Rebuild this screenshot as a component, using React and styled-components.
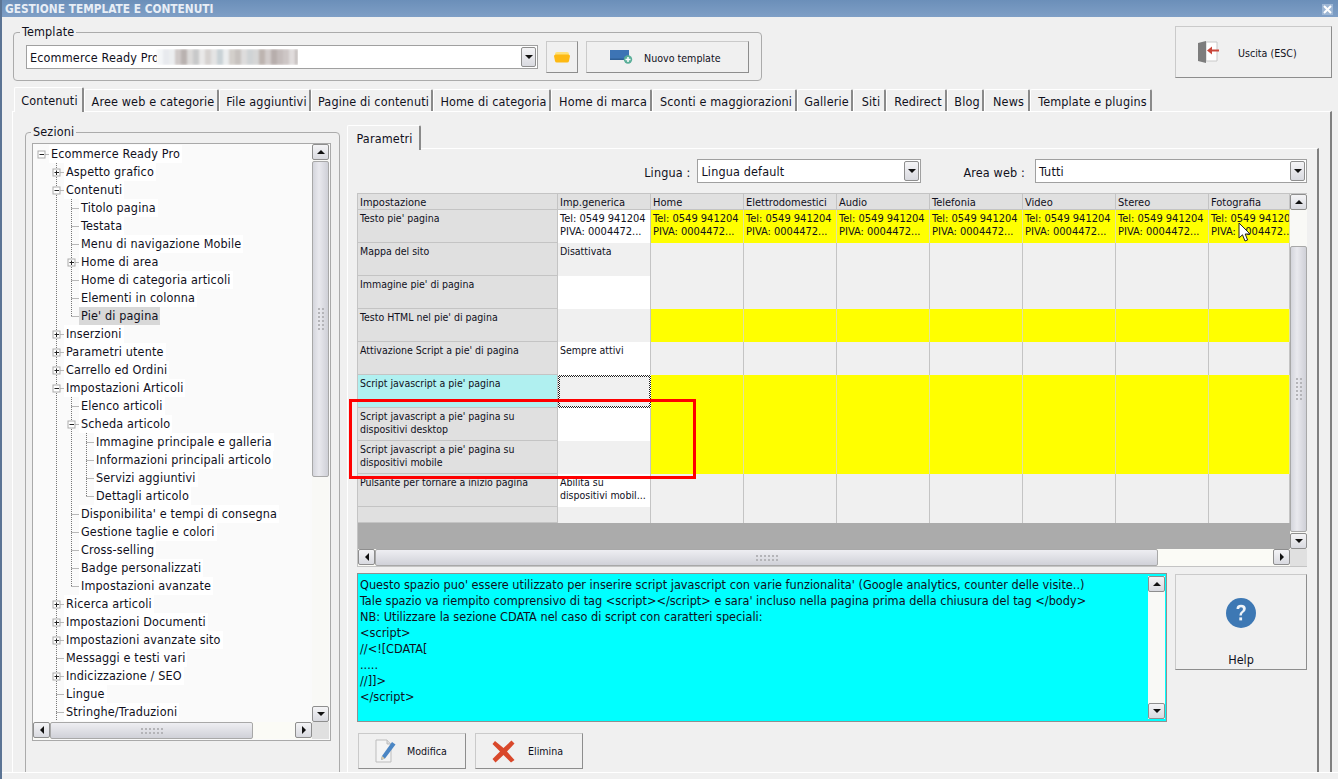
import React from 'react';
import styled, { createGlobalStyle } from 'styled-components';

const GlobalStyle = createGlobalStyle`
  html, body { margin: 0; padding: 0; background: #f0f0f0; }
  * { box-sizing: border-box; }
  body {
    font-family: "DejaVu Sans Condensed", "DejaVu Sans", sans-serif;
    font-stretch: condensed;
    font-size: 12.5px;
    letter-spacing: 0.15px;
    color: #10101c;
  }
`;

const Page = styled.div`
  position: relative;
  width: 1338px;
  height: 779px;
  overflow: hidden;
  display: flex;
  flex-direction: column;
  background: #f0f0f0;
  border-left: 2px solid #5b7494;
`;

const TitleBar = styled.div`
  height: 17px;
  flex: none;
  display: flex;
  align-items: center;
  justify-content: space-between;
  margin-left: -2px;
  padding: 1px 5px 0 5px;
  background: linear-gradient(#6b8fb9, #7f9fc6);
  color: #e8eef6;
  font-weight: bold;
  font-size: 11.8px;
  letter-spacing: 0;
`;

const CloseBox = styled.span`
  width: 11px;
  height: 11px;
  display: flex;
  align-items: center;
  justify-content: center;
  background: #9db6d4;
`;

const Header = styled.div`
  height: 70px;
  flex: none;
  display: flex;
  justify-content: space-between;
  align-items: flex-start;
  padding: 0 6px 0 11px;
`;

const Group = styled.fieldset`
  margin: 8px 0 0;
  padding: 0 12px;
  width: ${p => p.$w}px;
  height: ${p => p.$h}px;
  flex: none;
  border: 1px solid #ababab;
  border-radius: 4px;
`;

const GroupLabel = styled.legend`
  margin-left: ${p => p.$shift}px;
  padding: 0 2px;
  line-height: 14px;
`;

const TemplateRow = styled.div`
  display: flex;
  align-items: center;
  gap: 8px;
  padding-top: 2px;
`;

const Combo = styled.div`
  width: ${p => p.$w}px;
  height: 24px;
  flex: none;
  display: flex;
  align-items: center;
  justify-content: space-between;
  padding: 0 1px 0 3px;
  background: #fff;
  border: 1px solid #a0a0a0;
`;

const ComboText = styled.span`
  display: flex;
  align-items: center;
  overflow: hidden;
  white-space: nowrap;
`;

const ClippedName = styled.span`
  width: 127px;
  overflow: hidden;
`;

const blurStops = [
  '#f4f6f8', '#e8eaee', '#eceef0', '#cfc9c8', '#b9b2b0', '#dcdad9', '#c8c9ca', '#e9e8e8', '#d6d2d0',
  '#e4e4e4', '#c9d2d6', '#ebedee', '#d3cfcb', '#c7c2bf', '#dddcdc', '#cfd3d5', '#d6d6d6', '#bdb4b0',
  '#d2cccb', '#b7aeac', '#c4bcbb', '#cdc6c5', '#e0dcdc', '#c4bebd',
];

const blurGradient = blurStops
  .map((c, i) => `${c} ${i * 6}px, ${c} ${(i + 1) * 6}px`)
  .join(', ');

const BlurredUrl = styled.span`
  width: 141px;
  height: 16px;
  background: linear-gradient(90deg, ${blurGradient});
  filter: blur(0.8px);
`;

const FlatButton = styled.button`
  width: ${p => p.$w}px;
  height: ${p => p.$h}px;
  margin-top: ${p => p.$top || 0}px;
  flex: none;
  display: flex;
  flex-direction: ${p => (p.$stack ? 'column' : 'row')};
  align-items: center;
  justify-content: ${p => (p.$stack ? 'space-between' : 'flex-start')};
  gap: ${p => p.$gap || 0}px;
  padding: ${p => p.$pad || '0'};
  background: #f0f0f0;
  border: 1px solid #cacaca;
  border-right-color: #8d8d8d;
  border-bottom-color: #8d8d8d;
  font: inherit;
  font-size: 10.6px;
  letter-spacing: 0;
  color: #10101c;
`;

const ButtonText = styled.span`
  margin-top: ${p => p.$down || 0}px;
`;

const Tabs = styled.div`
  height: 24px;
  flex: none;
  display: flex;
  align-items: flex-end;
  padding-left: 12px;
`;

const Tab = styled.div`
  position: relative;
  z-index: 1;
  width: ${p => p.$w}px;
  height: ${p => (p.$active ? 25 : 22)}px;
  margin-bottom: ${p => (p.$active ? -1 : 0)}px;
  padding: 1px 0 0 ${p => (p.$active ? 2 : 4)}px;
  flex: none;
  display: flex;
  align-items: center;
  justify-content: center;
  white-space: nowrap;
  background: #f0f0f0;
  border-top: 1px solid #fff;
  border-left: 1px solid #fff;
  border-right: 2px solid #8a8a8a;
  border-top-left-radius: 2px;
  border-top-right-radius: 2px;
`;

const Panel = styled.div`
  height: 661px;
  flex: none;
  margin: 0 6px 0 10px;
  padding: 13px 0 0 12px;
  display: flex;
  align-items: flex-start;
  overflow: hidden;
  border-top: 1px solid #fff;
  border-left: 1px solid #fff;
  border-right: 2px solid #808080;
`;

const SectionsGroup = styled(Group)`
  margin: 0;
  padding: 0 7px 0 6px;
`;

const TreeBox = styled.div`
  width: 299px;
  height: 598px;
  margin-top: 4px;
  display: grid;
  grid-template-columns: 279px 17px;
  grid-template-rows: 578px 17px;
  background: #fafafa;
  border: 1px solid #a9a9a9;
`;

const TreeList = styled.div`
  overflow: hidden;
  padding-top: 1px;
`;

const TreeRow = styled.div`
  height: 18px;
  display: flex;
  align-items: center;
  white-space: nowrap;
`;

const TreeLabel = styled.span`
  height: 18px;
  line-height: 18px;
  padding: 0 2px;
  background: ${p => (p.$selected ? '#d8d8d8' : '#fff')};
`;

const RightColumn = styled.div`
  width: 972px;
  flex: none;
  margin-left: 7px;
`;

const SubTabs = styled.div`
  display: flex;
  height: 23px;
`;

const SubPanel = styled.div`
  height: 700px;
  padding: 10px 0 0 9px;
  border-top: 1px solid #fff;
  border-left: 1px solid #fff;
  border-right: 2px solid #808080;
`;

const Selectors = styled.div`
  width: 950px;
  display: flex;
  align-items: center;
  justify-content: flex-end;
`;

const SelectorLabel = styled.span`
  margin: 3px ${p => p.$gap}px 0 ${p => p.$before || 0}px;
`;

const GridBox = styled.div`
  width: 950px;
  height: 374px;
  margin-top: 10px;
  display: grid;
  grid-template-columns: 932px 17px;
  grid-template-rows: 355px 17px;
  border: 1px solid #c4c4c4;
  background: #e0e0e0;
`;

const GridArea = styled.div`
  background: #ababab;
  overflow: hidden;
`;

const Table = styled.div`
  display: grid;
  grid-template-columns: 200px repeat(7, 93px) 81px;
  grid-template-rows: 16px repeat(9, 33px) 16px;
  font-size: 10.5px;
  letter-spacing: 0;
  line-height: 13px;
`;

const HeadCell = styled.div`
  background: #e0e0e0;
  padding: 2px 0 0 2px;
  font-size: 11px;
  border-right: 1px solid #c4c4c4;
  border-bottom: 1px solid #c4c4c4;
  white-space: nowrap;
  overflow: hidden;
`;

const LabelCell = styled.div`
  background: ${p => (p.$current ? '#b0f0f0' : '#e0e0e0')};
  padding: 2px 0 0 2px;
  border-right: 1px solid #c4c4c4;
  border-bottom: 1px solid #c4c4c4;
`;

const cellColors = { w: '#ffffff', g: '#f0f0f0', y: '#ffff00' };

const ValueCell = styled.div`
  background: ${p => cellColors[p.$tone]};
  padding: 2px 0 0 2px;
  font-size: ${p => (p.$numbers ? 11 : 10.5)}px;
  border-right: 1px solid ${p => (p.$tone === 'y' ? '#e2e2a0' : '#c4c4c4')};
  white-space: nowrap;
  overflow: hidden;
`;

const FocusCell = styled.div`
  border: 2px solid transparent;
  background:
    linear-gradient(#f0f0f0, #f0f0f0) padding-box,
    repeating-conic-gradient(#222 0 25%, #fff 0 50%) 0 0 / 2px 2px border-box;
`;

const DescRow = styled.div`
  width: 950px;
  margin-top: 6px;
  display: flex;
  align-items: flex-start;
  gap: 8px;
`;

const Description = styled.div`
  width: 810px;
  height: 149px;
  flex: none;
  display: flex;
  justify-content: space-between;
  padding: 2px 1px 2px 2px;
  background: #00ffff;
  border: 1px solid #909090;
  font-size: 12.6px;
  letter-spacing: 0;
  line-height: 16px;
`;

const DescText = styled.div`
  padding-top: 1px;
`;

const DescLine = styled.div`
  white-space: pre;
`;

const HelpWrap = styled.div`
  padding-top: 1px;
`;

const HelpIconBox = styled.span`
  margin-top: 23px;
  display: flex;
`;

const HelpText = styled.span`
  margin-bottom: 2px;
  font-size: 12.5px;
`;

const Actions = styled.div`
  margin-top: 11px;
  margin-left: 1px;
  display: flex;
  gap: 9px;
`;

const Footer = styled.div`
  flex: 1;
  border-top: 1px solid #fff;
`;

const ScrollButton = styled.span`
  width: ${p => p.$w || 17}px;
  height: ${p => p.$h || 16}px;
  flex: none;
  display: flex;
  align-items: center;
  justify-content: center;
  background: linear-gradient(#f4f4f6, #d9dae0);
  border: 1px solid #8e8e8e;
  border-radius: 2px;
`;

const VBar = styled.div`
  width: 17px;
  height: ${p => (p.$h ? `${p.$h}px` : '100%')};
  flex: none;
  display: flex;
  flex-direction: column;
  background: #f9f9f6;
`;

const HBar = styled.div`
  height: 17px;
  display: flex;
  background: #fbfbf6;
`;

const VThumb = styled.span`
  height: ${p => p.$size}px;
  margin-top: ${p => p.$before}px;
  flex: none;
  display: flex;
  align-items: center;
  justify-content: center;
  background: linear-gradient(90deg, #d4d5dc, #e9e9ee 40%, #cfd0d7);
  border: 1px solid #a8a8a8;
  border-radius: 2px;
`;

const HThumb = styled.span`
  width: ${p => p.$size}px;
  flex: none;
  display: flex;
  align-items: center;
  justify-content: center;
  background: linear-gradient(#eeeef2, #d0d1d8);
  border: 1px solid #a8a8a8;
  border-radius: 2px;
`;

const Spacer = styled.span`
  flex: 1;
`;

const Grip = styled.span`
  width: ${p => (p.$flat ? 24 : 8)}px;
  height: ${p => (p.$flat ? 8 : 24)}px;
  background-image: radial-gradient(circle, #b4b4b8 1px, transparent 1px);
  background-size: 4px 4px;
`;

const Corner = styled.div`
  background: #e0e0e0;
`;

const RedMark = styled.div`
  position: absolute;
  left: 347px;
  top: 399px;
  width: 347px;
  height: 80px;
  border: 3px solid #f00;
`;

const Pointer = styled.svg`
  position: absolute;
  left: 1236px;
  top: 222px;
`;

function Arrow({ dir }) {
  const pts = {
    up: '0,5 8,5 4,1',
    down: '0,1 8,1 4,5',
    left: '5,0 5,8 1,4',
    right: '1,0 1,8 5,4',
  };
  const flat = dir === 'up' || dir === 'down';
  return (
    <svg width={flat ? 8 : 6} height={flat ? 6 : 8} viewBox={flat ? '0 0 8 6' : '0 0 6 8'}>
      <polygon points={pts[dir]} fill="#111" />
    </svg>
  );
}

function VScroll({ before, size, h }) {
  return (
    <VBar $h={h}>
      <ScrollButton><Arrow dir="up" /></ScrollButton>
      {size ? <VThumb $before={before} $size={size}><Grip /></VThumb> : null}
      <Spacer />
      <ScrollButton><Arrow dir="down" /></ScrollButton>
    </VBar>
  );
}

function HScroll({ size }) {
  return (
    <HBar>
      <ScrollButton><Arrow dir="left" /></ScrollButton>
      <HThumb $size={size}><Grip $flat /></HThumb>
      <Spacer />
      <ScrollButton><Arrow dir="right" /></ScrollButton>
    </HBar>
  );
}

const treeItems = [
  ['Ecommerce Ready Pro', 0, '-'],
  ['Aspetto grafico', 1, '+'],
  ['Contenuti', 1, '-'],
  ['Titolo pagina', 2],
  ['Testata', 2],
  ['Menu di navigazione Mobile', 2],
  ['Home di area', 2, '+'],
  ['Home di categoria articoli', 2],
  ['Elementi in colonna', 2],
  ["Pie' di pagina", 2, null, true],
  ['Inserzioni', 1, '+'],
  ['Parametri utente', 1, '+'],
  ['Carrello ed Ordini', 1, '+'],
  ['Impostazioni Articoli', 1, '-'],
  ['Elenco articoli', 2],
  ['Scheda articolo', 2, '-'],
  ['Immagine principale e galleria', 3],
  ['Informazioni principali articolo', 3],
  ['Servizi aggiuntivi', 3],
  ['Dettagli articolo', 3],
  ["Disponibilita' e tempi di consegna", 2],
  ['Gestione taglie e colori', 2],
  ['Cross-selling', 2],
  ['Badge personalizzati', 2],
  ['Impostazioni avanzate', 2],
  ['Ricerca articoli', 1, '+'],
  ['Impostazioni Documenti', 1, '+'],
  ['Impostazioni avanzate sito', 1, '+'],
  ['Messaggi e testi vari', 1],
  ['Indicizzazione / SEO', 1, '+'],
  ['Lingue', 1],
  ['Stringhe/Traduzioni', 1],
];

// is there another item of this level before the branch closes?
function continues(index, level) {
  for (let i = index + 1; i < treeItems.length; i++) {
    if (treeItems[i][1] < level) return false;
    if (treeItems[i][1] === level) return true;
  }
  return level === 1;
}

const dotted = { stroke: '#777', strokeWidth: 1, strokeDasharray: '1 1' };

function TreeGutter({ index, level, mark }) {
  const w = 16 + level * 15;
  const x = 8.5 + level * 15;
  const lines = [];
  for (let k = 1; k < level; k++) {
    if (continues(index, k)) {
      const lx = 8.5 + k * 15;
      lines.push(<line key={k} x1={lx} x2={lx} y1="0" y2="18" {...dotted} />);
    }
  }
  return (
    <svg width={w} height="18" style={{ flex: 'none' }}>
      {lines}
      {level > 0 && (
        <line x1={x} x2={x} y1="0" y2={continues(index, level) ? 18 : 9} {...dotted} />
      )}
      <line x1={x} x2={w} y1="9.5" y2="9.5" {...dotted} />
      {mark && (
        <g>
          <rect x={x - 3.5} y="6" width="7" height="7" fill="#fff" stroke="#ababab" />
          <line x1={x - 2} x2={x + 2.5} y1="9.5" y2="9.5" stroke="#222" />
          {mark === '+' && <line x1={x} x2={x} y1="7.5" y2="12" stroke="#222" />}
        </g>
      )}
    </svg>
  );
}

const FolderIcon = () => (
  <svg width="16" height="12" viewBox="0 0 16 12">
    <path d="M1 3 Q1 1 3 1 H13 Q15 1 15 3 V4 H1 Z" fill="#ffe27a" />
    <path d="M0 5 Q0 3.5 2 3.5 H14 Q16 3.5 16 5 L15 10 Q14.8 11.5 13 11.5 H3 Q1.2 11.5 1 10 Z" fill="#fdb913" />
  </svg>
);

const NewTemplateIcon = () => (
  <svg width="23" height="14" viewBox="0 0 23 14">
    <rect x="0" y="0" width="19" height="10" fill="#3d74b5" />
    <rect x="0" y="8.5" width="19" height="1.5" fill="#2f5f96" />
    <circle cx="18" cy="9.5" r="4.2" fill="#5aae98" />
    <path d="M18 7 V12 M15.5 9.5 H20.5" stroke="#fff" strokeWidth="1.5" />
  </svg>
);

const ExitIcon = () => (
  <svg width="22" height="22" viewBox="0 0 22 22">
    <path d="M8 1 H19 V20 H8 Z" fill="#fff" stroke="#c8c8c8" />
    <path d="M0 2 L8 0 V22 L0 20 Z" fill="#7d7d7d" />
    <path d="M9 9.5 L14 5.5 V8.5 H21 V10.5 H14 V13.5 Z" fill="#c9463a" />
  </svg>
);

const HelpIcon = () => (
  <svg width="30" height="30" viewBox="0 0 30 30">
    <circle cx="15" cy="15" r="15" fill="#3d78b4" />
    <path d="M10.5 11 Q10.5 6.8 15 6.8 Q19.8 6.8 19.8 10.8 Q19.8 13 17.4 14.4 Q15.8 15.4 15.8 17.6 H13.4 Q13.4 14.6 15.6 13.2 Q17 12.2 17 10.9 Q17 9.2 15 9.2 Q13.2 9.2 13.1 11 Z" fill="#eef3f8" />
    <rect x="13.3" y="19.4" width="2.8" height="3" fill="#eef3f8" />
  </svg>
);

const EditIcon = () => (
  <svg width="21" height="24" viewBox="0 0 21 24">
    <path d="M1 1 H12 L16 5 V23 H1 Z" fill="#f4f4f4" stroke="#bdbdbd" />
    <path d="M12 1 V5 H16" fill="#dedede" stroke="#bdbdbd" />
    <path d="M7 17 L17 3 L20.5 5.5 L10 19.5 L6 21 Z" fill="#4b86c4" />
    <path d="M7 17 L10 19.5 L6 21 Z" fill="#d8c9a8" />
  </svg>
);

const DeleteIcon = () => (
  <svg width="23" height="23" viewBox="0 0 23 23">
    <path d="M3 1 L11.5 8 L19.5 0.5 L22.5 3.5 L15 11.5 L22.5 20 L19 22.5 L11.5 15 L3.5 22.5 L0.5 19 L8 11.5 L0.5 4 Z" fill="#d9482b" />
  </svg>
);

const tabs = [
  ['Contenuti', 70],
  ['Aree web e categorie', 135],
  ['File aggiuntivi', 92],
  ['Pagine di contenuti', 122],
  ['Home di categoria', 118],
  ['Home di marca', 101],
  ['Sconti e maggiorazioni', 145],
  ['Gallerie', 56],
  ['Siti', 33],
  ['Redirect', 61],
  ['Blog', 37],
  ['News', 46],
  ['Template e plugins', 122],
];

const columns = ['Impostazione', 'Imp.generica', 'Home', 'Elettrodomestici', 'Audio', 'Telefonia', 'Video', 'Stereo', 'Fotografia'];

const FOOTER_TEXT = ['Tel: 0549 941204', 'PIVA: 0004472...'];

// tone of "Imp.generica" and of the seven area columns, row by row
const rows = [
  { label: ["Testo pie' pagina"], value: FOOTER_TEXT, tone: 'w', area: 'y', areaText: FOOTER_TEXT },
  { label: ['Mappa del sito'], value: ['Disattivata'], tone: 'g', area: 'g' },
  { label: ["Immagine pie' di pagina"], tone: 'w', area: 'g' },
  { label: ["Testo HTML nel pie' di pagina"], tone: 'g', area: 'y' },
  { label: ["Attivazione Script a pie' di pagina"], value: ['Sempre attivi'], tone: 'w', area: 'g' },
  { label: ["Script javascript a pie' pagina"], tone: 'g', area: 'y', current: true },
  { label: ["Script javascript a pie' pagina su", 'dispositivi desktop'], tone: 'w', area: 'y' },
  { label: ["Script javascript a pie' pagina su", 'dispositivi mobile'], tone: 'g', area: 'y' },
  { label: ['Pulsante per tornare a inizio pagina'], value: ['Abilita su', 'dispositivi mobil...'], tone: 'w', area: 'g' },
  { label: [''], tone: 'g', area: 'g' },
];

const descLines = [
  "Questo spazio puo' essere utilizzato per inserire script javascript con varie funzionalita' (Google analytics, counter delle visite..)",
  "Tale spazio va riempito comprensivo di tag <script></script> e sara' incluso nella pagina prima della chiusura del tag </body>",
  'NB: Utilizzare la sezione CDATA nel caso di script con caratteri speciali:',
  '<script>',
  '//<![CDATA[',
  '.....',
  '//]]>',
  '</script>',
];

const lines = (arr) => (arr || []).map((t, i) => <div key={i}>{t}</div>);

export default function App() {
  return (
    <Page>
      <GlobalStyle />
      <TitleBar>
        GESTIONE TEMPLATE E CONTENUTI
        <CloseBox>
          <svg width="9" height="9" viewBox="0 0 9 9">
            <path d="M1 1 L8 8 M8 1 L1 8" stroke="#fff" strokeWidth="2" />
          </svg>
        </CloseBox>
      </TitleBar>

      <Header>
        <Group $w={747} $h={56}>
          <GroupLabel $shift={-6}>Template</GroupLabel>
          <TemplateRow>
            <Combo $w={512}>
              <ComboText>
                <ClippedName>Ecommerce Ready Pro</ClippedName>
                <BlurredUrl />
              </ComboText>
              <ScrollButton $w={15} $h={20}><Arrow dir="down" /></ScrollButton>
            </Combo>
            <FlatButton $w={32} $h={32} $pad="0 0 0 7px"><FolderIcon /></FlatButton>
            <FlatButton $w={163} $h={32} $pad="0 0 0 23px" $gap={11}>
              <NewTemplateIcon />
              <ButtonText $down={2}>Nuovo template</ButtonText>
            </FlatButton>
          </TemplateRow>
        </Group>
        <FlatButton $w={157} $h={52} $top={9} $pad="0 0 0 22px" $gap={18}>
          <ExitIcon />
          <ButtonText $down={2}>Uscita (ESC)</ButtonText>
        </FlatButton>
      </Header>

      <Tabs>
        {tabs.map(([name, w], i) => (
          <Tab key={name} $w={w} $active={i === 0}>{name}</Tab>
        ))}
      </Tabs>

      <Panel>
        <SectionsGroup $w={315} $h={700}>
          <GroupLabel $shift={-1}>Sezioni</GroupLabel>
          <TreeBox>
            <TreeList>
              {treeItems.map(([text, level, mark, selected], i) => (
                <TreeRow key={i}>
                  <TreeGutter index={i} level={level} mark={mark} />
                  <TreeLabel $selected={selected}>{text}</TreeLabel>
                </TreeRow>
              ))}
            </TreeList>
            <VScroll before={1} size={316} />
            <HScroll size={203} />
            <Corner />
          </TreeBox>
        </SectionsGroup>

        <RightColumn>
          <SubTabs>
            <Tab $w={74} $active>Parametri</Tab>
          </SubTabs>
          <SubPanel>
            <Selectors>
              <SelectorLabel $gap={7}>Lingua :</SelectorLabel>
              <Combo $w={224}>
                Lingua default
                <ScrollButton $w={15} $h={20}><Arrow dir="down" /></ScrollButton>
              </Combo>
              <SelectorLabel $gap={10} $before={42}>Area web :</SelectorLabel>
              <Combo $w={272}>
                Tutti
                <ScrollButton $w={15} $h={20}><Arrow dir="down" /></ScrollButton>
              </Combo>
            </Selectors>

            <GridBox>
              <GridArea>
                <Table>
                  {columns.map(c => <HeadCell key={c}>{c}</HeadCell>)}
                  {rows.map((r, i) => (
                    <React.Fragment key={i}>
                      <LabelCell $current={r.current}>{lines(r.label)}</LabelCell>
                      {r.current
                        ? <FocusCell />
                        : <ValueCell $tone={r.tone} $numbers={r.value === FOOTER_TEXT}>{lines(r.value)}</ValueCell>}
                      {columns.slice(2).map(c => (
                        <ValueCell key={c} $tone={r.area} $numbers={!!r.areaText}>{lines(r.areaText)}</ValueCell>
                      ))}
                    </React.Fragment>
                  ))}
                </Table>
              </GridArea>
              <VScroll before={36} size={286} />
              <HScroll size={783} />
              <Corner />
            </GridBox>

            <DescRow>
              <Description>
                <DescText>
                  {descLines.map((l, i) => <DescLine key={i}>{l}</DescLine>)}
                </DescText>
                <VScroll h={143} />
              </Description>
              <HelpWrap>
                <FlatButton $w={132} $h={96} $stack>
                  <HelpIconBox><HelpIcon /></HelpIconBox>
                  <HelpText>Help</HelpText>
                </FlatButton>
              </HelpWrap>
            </DescRow>

            <Actions>
              <FlatButton $w={108} $h={36} $pad="0 0 0 16px" $gap={11}>
                <EditIcon />
                Modifica
              </FlatButton>
              <FlatButton $w={108} $h={36} $pad="0 0 0 16px" $gap={13}>
                <DeleteIcon />
                Elimina
              </FlatButton>
            </Actions>
          </SubPanel>
        </RightColumn>
      </Panel>
      <Footer />

      <RedMark />
      <Pointer width="14" height="21" viewBox="0 0 14 21">
        <path d="M1 1 V16 L4.5 12.8 L7 19 L9.6 18 L7.2 12 H12 Z" fill="#fff" stroke="#222" strokeWidth="1" />
      </Pointer>
    </Page>
  );
}
